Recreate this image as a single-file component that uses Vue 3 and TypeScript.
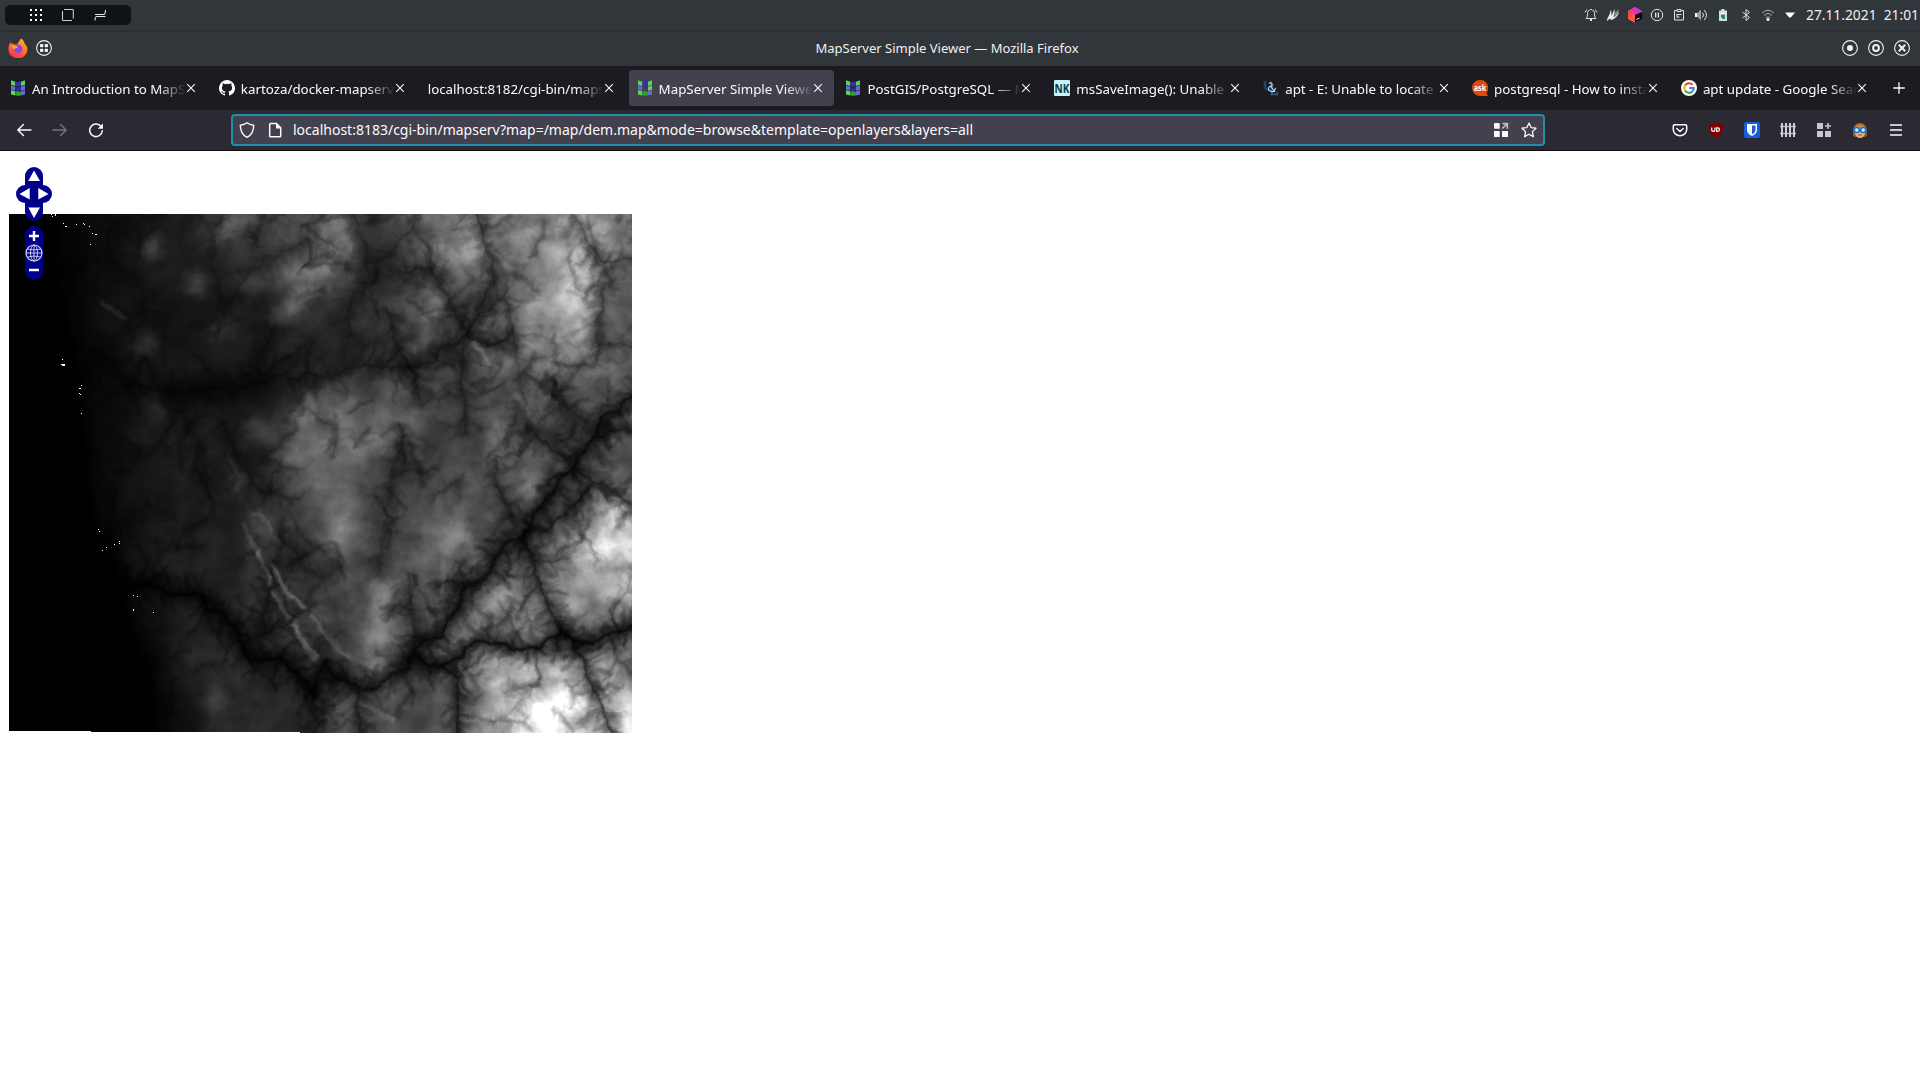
<script setup lang="ts">
interface Tab {
  title: string
  icon: string
  active?: boolean
}

const tabs: Tab[] = [
  { title: 'An Introduction to MapServer', icon: 'mapserver' },
  { title: 'kartoza/docker-mapserver', icon: 'github' },
  { title: 'localhost:8182/cgi-bin/mapserv', icon: '' },
  { title: 'MapServer Simple Viewer', icon: 'mapserver', active: true },
  { title: 'PostGIS/PostgreSQL — MapServer', icon: 'mapserver' },
  { title: 'msSaveImage(): Unable to access', icon: 'nk' },
  { title: 'apt - E: Unable to locate package', icon: 'unix' },
  { title: 'postgresql - How to install', icon: 'ask' },
  { title: 'apt update - Google Search', icon: 'google' },
]

const tray = ['bell', 'flames', 'toolbox', 'pause', 'clipboard', 'volume', 'battery', 'bluetooth', 'wifi', 'caret']
const addons = ['pocket', 'ublock', 'bitwarden', 'fence', 'extensions', 'face', 'menu']

const icons: Record<string, string> = {
  mapserver:
    '<path d="M1 .3l4.300 1.500v4.200L1 4.800zM15 .3l-4 1.500v4.200L15 4.800z" fill="#62d162"/><path d="M5.300 1.500L8 2.300l3-1v4.500L8 6.800 5.300 5.800z" fill="#3431a0"/><path d="M1 5.300l4.300 1.500v4L1 9.800zM15 5.300l-4 1.500v4L15 9.800z" fill="#6a67cf"/><path d="M5.300 6.800L8 7.500l3-1v4L8 11.500 5.300 10.500z" fill="#2d2a9c"/><path d="M1 10.300l4.300 1v4.200L1 14.500z" fill="#62d162"/><path d="M5.300 12L8 11l3 1v3.200L8 16l-2.700-.8z" fill="#2ba02b"/><path d="M15 10.300l-4 1v4.200l4-1z" fill="#6a67cf"/>',
  mapserverActive:
    '<path d="M1 .3l4.300 1.500v4.200L1 4.800zM15 .3l-4 1.500v4.200L15 4.800z" fill="#62d162"/><path d="M5.700 1L8 0l2.500 1v7L8 7.500l-2.300.5z" fill="#3431b0"/><path d="M1 5.300l4.300 1.500v4L1 9.800z" fill="#6a67cf"/><path d="M15 5.300l-4 1.500v4L15 9.800zM1 10.300l4.300 1v4.200L1 14.500z" fill="#62d162"/><path d="M5.300 12L8 11l3 1v3.200L8 16l-2.700-.8z" fill="#2ba02b"/><path d="M15 10.300l-4 1v4.200l4-1z" fill="#6a67cf"/>',
  github:
    '<path fill="#fff" d="M8 0a8 8 0 0 0-2.530 15.590c.4.070.550-.17.550-.38v-1.490c-2.230.480-2.700-.95-2.700-.95-.36-.92-.89-1.170-.89-1.170-.73-.5.060-.49.060-.49.800.060 1.230.830 1.230.830.710 1.220 1.870.870 2.330.660.070-.52.280-.87.500-1.070-1.780-.2-3.640-.89-3.640-3.950 0-.87.310-1.590.820-2.150-.08-.2-.36-1.020.08-2.120 0 0 .67-.22 2.200.820a7.600 7.600 0 0 1 4 0c1.530-1.040 2.200-.82 2.200-.82.440 1.100.160 1.920.080 2.120.510.560.820 1.270.820 2.150 0 3.070-1.870 3.750-3.650 3.950.290.250.540.730.540 1.480v2.200c0 .21.150.460.550.380A8 8 0 0 0 8 0z"/>',
  nk: '<rect width="16" height="16" rx="1" fill="#c5f3fb"/><text x="8" y="12.500" text-anchor="middle" textLength="15" lengthAdjust="spacingAndGlyphs" font-family="Noto Sans, sans-serif" font-size="12" font-weight="700" fill="#103a3e">NK</text>',
  unix: '<path d="M0 1h4v.8h-.8v5.500q.2 2 2 2t2-2V1.800H6.500V1H9v.8h-.7v6q-.5 3-3.500 3t-4-3v-6H0z" fill="#243f6b"/><path d="M7 5h4v.8h-1v8h3q1-.5 1-2h1v3.500H7v-.8h1v-8H7z" fill="#3a5a80"/><path d="M6 3.500q2.500-1.500 3 .5t-2 2.500q-3 2-.5 4t5 .5l1-3M8 6.500l4 5.500" fill="none" stroke="#b9d5ea" stroke-width="1.200"/>',
  ask: '<path d="M8 0a8 8 0 0 0 0 16h8l-1.500-3A8 8 0 0 0 8 0z" fill="#dd4b0a"/><text x="8" y="10.500" text-anchor="middle" textLength="12.500" lengthAdjust="spacingAndGlyphs" font-family="Noto Sans, sans-serif" font-size="8" font-weight="700" fill="#fff">ask</text>',
  google:
    '<circle cx="8" cy="8" r="8" fill="#fff"/><g fill="none" stroke-width="2.100"><path d="M11.600 4.700A4.700 4.700 0 0 0 4.100 5.500" stroke="#ea4335"/><path d="M4.100 5.500a4.700 4.700 0 0 0 0 5" stroke="#fbbc05"/><path d="M4.100 10.500a4.700 4.700 0 0 0 7.200 1.100" stroke="#34a853"/><path d="M11.300 11.600A4.800 4.800 0 0 0 12.700 8H8.200" stroke="#4285f4"/></g>',
  bell: '<g fill="none" stroke="#dfe1e2" stroke-width="1"><path d="M3 11.500c1.500-1.500 1.500-3 1.500-5 0-2 1-3.500 2-3 .5-1.500 2.500-1.500 3 0 1-.5 2 1 2 3 0 2 0 3.500 1.500 5z"/><path d="M2 5.500L3.800 2.500M14 5.500L12.200 2.500"/></g><path d="M7 12h2v2H7z" fill="#dfe1e2"/>',
  flames:
    '<path d="M2 14c0-4 3-5 3.500-11C7 5 6.500 7 6 8.500 8 7 8.500 5 9 2c1.500 3 .5 6-1 8 2.500-1 4-3 6-5-1 4-4 7-8 8l-1-1.500z" fill="#eceeee"/><path d="M10 6l4-4-1 4-4 5z" fill="#888d90"/>',
  toolbox:
    '<defs><linearGradient id="tbx" x1="0" y1="0" x2="1" y2="1"><stop offset="0" stop-color="#ff3a5c"/><stop offset=".5" stop-color="#ff5a3a"/><stop offset="1" stop-color="#c52dff"/></linearGradient><linearGradient id="tby" x1="0" y1="0" x2="1" y2="0"><stop offset="0" stop-color="#ff3d6e"/><stop offset="1" stop-color="#b62dff"/></linearGradient></defs><path d="M8 0l7 4v8l-7 4-7-4V4z" fill="url(#tbx)"/><path d="M8 0l7 4v4L8 8 1 4z" fill="url(#tby)"/><path d="M8 8l7-3v7l-7 4z" fill="#080808"/><path d="M9.500 12.500l3-1.500" stroke="#fff"/>',
  pause: '<circle cx="8" cy="8" r="5.700" fill="none" stroke="#dfe1e2"/><path d="M6 5.500h1.300v5H6zM8.700 5.500H10v5H8.700z" fill="#dfe1e2"/>',
  clipboard: '<path d="M6 3.500H3.500v9.500h9V3.500H10M6 2.500h4v2H6zM6 7.500h4.500M6 10h2.500M6 7v3.500" fill="none" stroke="#dfe1e2"/>',
  volume: '<path d="M2 6h2.500L8 2.500v11L4.500 10H2z" fill="#9b9fa2"/><path d="M2 6h2v4H2z" fill="#fff"/><path d="M9.500 5.500q2 2.500 0 5M11.200 3q4.500 5 0 10" fill="none" stroke="#dfe1e2"/>',
  battery: '<path d="M6.500 2h3v1.500h-3zM4 3.500h8v10.500H4z" fill="#d8dcdd"/><path d="M6 6h4v6H6z" fill="#178b6e"/><path d="M6 6h4v1.500H6zM6 10l1.500 2H6z" fill="#fff"/>',
  bluetooth: '<path d="M4.500 5l7 5.500L8 13.500V2.500l3.500 3L4.500 11" fill="none" stroke="#dfe1e2"/>',
  wifi: '<g fill="none" stroke="#a9adaf"><path d="M2 6q6-5.500 12 0M4 8.500q4-4 8 0M5.800 11q2.200-2.500 4.400 0"/></g><circle cx="8" cy="12.500" r="1.500" fill="#fff"/>',
  caret: '<path d="M3 5.500h10L8.800 10.500H7.200z" fill="#fff"/>',
  pocket: '<g fill="none" stroke="#fbfbfe" stroke-width="1.500" stroke-linecap="round" stroke-linejoin="round"><path d="M2.500 2.800h11q1.200 0 1.200 1.200v3.500a6.700 6.200 0 0 1-13.400 0V4q0-1.200 1.200-1.200z"/><path d="M4.800 6.500L8 9.500l3.200-3"/></g>',
  ublock: '<path d="M8 .3c2.500 1.700 4 1.900 7 1.900 0 7-.5 10-7 13.700C1.500 12.200 1 9.200 1 2.200c3 0 4.500-.2 7-1.900z" fill="#800000"/><path d="M3.700 5.500v2.300a1.600 1.600 0 0 0 3.200 0V5.500M8.700 5.800v3.600h1a1.800 1.800 0 0 0 0-3.600z" stroke="#fff" stroke-width="1.200" fill="none"/>',
  bitwarden: '<rect width="16" height="16" rx="2" fill="#175ddc"/><path d="M3 2h10v6c0 3-2.500 4.800-5 6-2.500-1.200-5-3-5-6z" fill="#fff"/><path d="M8 3.500h3.500V8c0 2-1.500 3.200-3.500 4.300z" fill="#175ddc"/>',
  fence: '<path d="M0 4.500h16M0 11.500h16" stroke="#b7b7bb" stroke-width="1.300"/><path d="M2 1v14M6 1v14M10 1v14M14 1v14" stroke="#cfcfd3" stroke-width="2"/>',
  extensions: '<path d="M1 1h6v6H1zM1 9h6v6H1zM9 9h6v6H9z" fill="#c8c8cc"/><path d="M12 1v6M9 4h6" stroke="#c8c8cc" stroke-width="1.600"/>',
  face: '<path d="M1.500 14C0 5 3 1 8 1s8 4 6.500 13l-2 1h-9z" fill="#a3622b"/><path d="M3 6h10v5q-1 5-5 5t-5-5z" fill="#e8b07c"/><path d="M3.500 4Q8 1 12.500 4l.5 2H3z" fill="#c98a45"/><g fill="#d9f0ff" stroke="#1a76d2" stroke-width="1.600"><circle cx="4.800" cy="8" r="2.500"/><circle cx="11.200" cy="8" r="2.500"/></g><path d="M6 13h4" stroke="#c33"/>',
  menu: '<path d="M2 3h12M2 8h12M2 13h12" stroke="#fbfbfe" stroke-width="1.400"/>',
  back: '<path d="M15 8H2M7.500 2.500L1.800 8l5.700 5.500" fill="none" stroke="#fbfbfe" stroke-width="1.400" stroke-linecap="round" stroke-linejoin="round"/>',
  forward: '<path d="M1 8h13M8.500 2.500L14.200 8l-5.700 5.500" fill="none" stroke="#75747c" stroke-width="1.400" stroke-linecap="round" stroke-linejoin="round"/>',
  reload: '<path d="M13.400 5A6.300 6.300 0 1 0 14.300 8.800" fill="none" stroke="#fbfbfe" stroke-width="1.500" stroke-linecap="round"/><path d="M15 1.500v5.300H9.700z" fill="#fbfbfe"/>',
  shield: '<path d="M8 .8c2 1.700 4.200 2.300 6.700 2.400C14.700 9 13 12.800 8 15.300 3 12.800 1.300 9 1.300 3.200 3.800 3.100 6 2.500 8 .8z" fill="none" stroke="#fbfbfe" stroke-width="1.400" stroke-linejoin="round"/>',
  page: '<path d="M3.500 1.500h6l4.200 4.200V14q0 .8-.8.8H3.500q-.8 0-.8-.8V2.300q0-.8.800-.8z" fill="none" stroke="#fbfbfe" stroke-width="1.500"/><path d="M9 1.500v5h5z" fill="#fbfbfe"/>',
  apps: '<path d="M1.500 1h4.500q.7 0 .7.700v5H1.700Q1 6.700 1 6V1.500zM1 9h5.700v6H1.500L1 14.500zM9 9h6v5.500l-.5.500H9z" fill="#fbfbfe"/><path d="M9.500 1.700h4.800v5M14.500 1.500L9.300 6.500" stroke="#c0c0c4" stroke-width="1.700" fill="none"/>',
  star: '<path d="M8 1l2.100 4.600 4.900.6-3.600 3.400.9 5L8 12.200l-4.300 2.400.9-5L1 6.200l4.900-.6z" fill="none" stroke="#fbfbfe" stroke-width="1.300" stroke-linejoin="round"/>',
  firefox:
    '<defs><linearGradient id="fx" x1=".8" y1="0" x2=".3" y2="1"><stop offset="0" stop-color="#ffb52e"/><stop offset=".45" stop-color="#ff7a28"/><stop offset="1" stop-color="#f5304f"/></linearGradient></defs><path d="M10.500.3c2 1.400 2.700 2.900 2.800 4.200 1.900 1.500 2.400 3.500 2.200 5.300A7.500 6.800 0 0 1 .4 9C.3 6.800.900 5 2 3.300l.5 1.400 1-.8.6 1.100 2.600.2C9 4 8.500 2 10.500.3z" fill="url(#fx)"/><circle cx="8" cy="8.600" r="3.500" fill="#8a45e8"/><path d="M2.800 6l4.500.6c1 .3.500 1.300-.8 1.600L4.500 9z" fill="#ffa436"/>',
  grid: '<circle cx="8" cy="8" r="7.400" fill="none" stroke="#eff0f1" stroke-width="1.100"/><g fill="#eff0f1"><rect x="4" y="4" width="3.300" height="3.300" rx=".8"/><rect x="8.700" y="4" width="3.300" height="3.300" rx=".8"/><rect x="4" y="8.700" width="3.300" height="3.300" rx=".8"/><rect x="8.700" y="8.700" width="3.300" height="3.300" rx=".8"/></g>',
  minimize: '<circle cx="8" cy="8" r="7.400" fill="none" stroke="#eff0f1" stroke-width="1.100"/><circle cx="8" cy="8" r="3" fill="#eff0f1"/>',
  maximize: '<circle cx="8" cy="8" r="7.400" fill="none" stroke="#eff0f1" stroke-width="1.100"/><circle cx="8" cy="8" r="2.900" fill="none" stroke="#eff0f1" stroke-width="2"/>',
  closeWin: '<circle cx="8" cy="8" r="7.400" fill="none" stroke="#eff0f1" stroke-width="1.100"/><path d="M4.800 4.800l6.400 6.400M11.200 4.800l-6.400 6.400" stroke="#eff0f1" stroke-width="2"/>',
  dots: '<path d="M2 2h2v2H2zM7 2h2v2H7zM12 2h2v2h-2zM2 7h2v2H2zM7 7h2v2H7zM12 7h2v2h-2zM2 12h2v2H2zM7 12h2v2H7zM12 12h2v2h-2z" fill="#fcfcfc"/>',
  square: '<path d="M4 2.500h8.500q.8 0 .8.800v8.200M12 13.500H3.300q-.8 0-.8-.8V4" fill="none" stroke="#c9cbcc" stroke-width="1.100"/>',
  swap: '<path d="M3 7.500h8.500q2 0 2-4.500M13.500 9.500H5q-2 0-2 4" fill="none" stroke="#e4e5e6" stroke-width="1.100"/>',
  x: '<path d="M4.200 4.200l7.600 7.600M11.800 4.200l-7.600 7.600" stroke="#fbfbfe" stroke-width="1.100"/>',
  plus: '<path d="M8 2.200v11.600M2.200 8h11.600" stroke="#fbfbfe" stroke-width="1.300"/>',
}

/* Coarse elevation grid: 16 × 13 gray levels across the DEM extent */
const elevation: number[][] = [
  [0, 3, 12, 20, 24, 52, 48, 62, 72, 40, 85, 105, 95, 112, 135, 95],
  [0, 2, 11, 20, 24, 26, 45, 68, 60, 34, 50, 85, 78, 98, 150, 80],
  [0, 1, 14, 16, 14, 26, 20, 36, 34, 44, 70, 45, 68, 112, 128, 72],
  [0, 0, 9, 22, 18, 24, 22, 26, 26, 36, 42, 52, 76, 98, 110, 80],
  [0, 0, 8, 13, 12, 12, 14, 34, 60, 58, 62, 52, 64, 78, 62, 70],
  [0, 0, 8, 20, 26, 24, 32, 84, 86, 80, 56, 48, 72, 60, 42, 68],
  [0, 0, 8, 18, 24, 24, 26, 84, 78, 54, 46, 60, 72, 75, 52, 70],
  [0, 0, 8, 18, 22, 24, 32, 52, 88, 54, 62, 74, 58, 45, 75, 130],
  [0, 0, 2, 20, 26, 26, 42, 36, 70, 48, 80, 82, 50, 62, 130, 165],
  [0, 0, 0, 14, 22, 24, 42, 46, 48, 80, 72, 60, 98, 92, 112, 125],
  [0, 0, 0, 5, 26, 26, 32, 44, 48, 86, 46, 80, 85, 85, 75, 80],
  [0, 0, 0, 1, 22, 40, 26, 34, 40, 66, 48, 88, 118, 150, 110, 115],
  [0, 0, 0, 0, 12, 32, 34, 32, 64, 66, 60, 72, 130, 205, 180, 160],
]
const cellW = 623 / 16
const cellH = 519 / 13
const cells = elevation.flatMap((row, r) =>
  row.map((v, c) => {
    const x0 = c === 0 ? -40 : 9 + c * cellW
    const x1 = c === 15 ? 690 : 9 + (c + 1) * cellW + 0.5
    const y0 = r === 0 ? 160 : 214 + r * cellH
    const y1 = r === 12 ? 790 : 214 + (r + 1) * cellH + 0.5
    return { x: x0, y: y0, w: x1 - x0, h: y1 - y0, fill: `rgb(${v},${v},${v})` }
  }),
)

/* Highlands: cx, cy, rx, ry, rotation, opacity */
const highlands: number[][] = [
  [234, 225, 20, 7, -25, 0.2], [153, 246, 6, 13, 0, 0.2], [197, 284, 12, 10, 30, 0.15],
  [293, 272, 18, 6, -28, 0.22], [293, 305, 24, 7, -38, 0.24], [250, 283, 14, 5, -15, 0.14],
  [320, 275, 14, 18, 40, 0.16], [342, 248, 13, 11, 0, 0.22], [333, 225, 12, 8, 0, 0.2],
  [465, 248, 14, 22, 10, 0.16], [434, 308, 9, 18, 10, 0.2], [417, 345, 12, 6, -40, 0.18],
  [611, 250, 6, 8, 0, 0.34], [578, 285, 16, 38, 18, 0.16], [584, 320, 12, 22, 10, 0.16],
  [540, 310, 22, 12, -20, 0.1], [600, 228, 10, 12, 0, 0.14], [145, 342, 8, 14, 10, 0.07],
  [220, 330, 16, 10, -30, 0.08], [155, 405, 8, 22, -12, 0.06], [260, 430, 18, 12, 0, 0.06],
  [310, 405, 10, 18, 0, 0.16], [345, 408, 26, 10, -10, 0.1], [372, 440, 30, 10, -45, 0.1],
  [340, 530, 16, 16, 0, 0.12], [410, 420, 10, 10, 0, 0.16], [497, 440, 10, 16, -30, 0.12],
  [453, 535, 14, 20, 30, 0.16], [530, 487, 10, 14, 0, 0.18], [611, 528, 13, 36, 28, 0.3],
  [592, 556, 14, 24, 50, 0.14], [508, 600, 22, 16, 0, 0.14], [530, 620, 14, 10, 0, 0.12],
  [575, 605, 14, 10, -40, 0.12], [628, 590, 10, 26, 30, 0.16], [381, 620, 12, 30, 4, 0.14],
  [463, 635, 12, 9, -30, 0.22], [375, 664, 14, 10, 0, 0.2], [495, 675, 12, 22, 10, 0.14],
  [558, 708, 24, 16, -30, 0.38], [556, 722, 12, 10, 0, 0.7], [525, 702, 24, 9, -35, 0.26],
  [560, 668, 14, 14, 20, 0.14], [607, 672, 10, 24, -20, 0.2], [626, 716, 10, 24, 0, 0.2],
  [193, 655, 6, 14, -20, 0.06], [215, 705, 10, 16, 0, 0.07], [318, 618, 6, 14, -30, 0.14],
  [238, 480, 5, 18, -12, 0.12], [265, 524, 10, 18, -35, 0.12],
]

/* Sharp ridge crests */
const ridges: [string, number][] = [
  ['M100 300L113 310L127 321', 0.1], ['M243 522L255 548L258 556', 0.12],
  ['M257 550L267 573L271 586', 0.18], ['M273 563L280 582L290 597L307 607', 0.26],
  ['M274 590L281 606L288 617', 0.22], ['M292 621L302 640L316 659', 0.24],
  ['M310 613L328 638L353 660', 0.16], ['M256 512L270 528L280 546', 0.12],
  ['M472 342L482 352L489 364', 0.22], ['M441 560L444 580L440 600', 0.1],
  ['M360 703L375 710L395 722', 0.16], ['M514 392L525 408L534 424', 0.1],
  ['M228 452L236 474L239 490', 0.05],
]

/* Valley lines as point lists, with width and darkness */
interface Valley { p: number[][]; w: number; o: number }
const v = (s: string, w: number, o: number): Valley => ({
  p: s.split(' ').map((t) => t.split(',').map(Number)),
  w,
  o,
})
const valleys: Valley[] = [
  v('97,350 113,363 127,385 147,388 170,393 207,390 247,387 277,377 290,380 310,374 327,380 347,368 377,366 410,368 433,360 443,347 460,342 467,332', 1.4, 0.6),
  v('467,332 450,305 440,285 430,268 400,272', 2, 0.5),
  v('467,332 480,315 500,300 508,290', 1.5, 0.55),
  v('467,332 480,342 490,345 505,340 515,330', 2, 0.6),
  v('475,205 483,240 492,265 493,285 475,312', 2, 0.5),
  v('567,205 587,240 600,260 620,262 640,254', 1.6, 0.5),
  v('605,283 600,317 597,347 597,363', 1.8, 0.5),
  v('597,346 612,344 640,348', 1.5, 0.45),
  v('640,385 630,396 617,410 600,420 595,437 580,457 573,467 557,485 540,507 527,532 510,540 497,557 483,580 463,588 460,603 445,627 440,637 423,640 413,650 407,667 383,680 373,690 360,687 347,682 332,677 327,660 320,673 313,697', 2.6, 0.85),
  v('640,429 610,430 597,437', 2, 0.7),
  v('540,383 557,383 563,407 587,423', 1.5, 0.6),
  v('527,427 550,447 570,463', 1.8, 0.6),
  v('523,533 533,567 547,603 560,630 573,640 587,673 603,707 614,740', 2, 0.75),
  v('640,627 620,630 593,643 573,640 560,633 540,647 523,650 497,643 477,640 460,657 443,665 427,668 415,653', 3, 0.9),
  v('443,665 457,680 458,707 457,740', 2, 0.8),
  v('593,483 570,510 543,530 523,533', 2, 0.7),
  v('573,467 600,483 640,510', 2, 0.7),
  v('100,586 127,586 153,585 173,595 200,592 208,610 223,613 237,633 247,657 263,662 282,658 297,673 315,697', 3, 0.95),
  v('245,645 263,633 263,613 272,587 273,563', 1.5, 0.7),
  v('263,633 283,627 293,617 313,603', 1.2, 0.6),
  v('358,690 357,707 362,740', 1.6, 0.7),
  v('313,697 312,712 318,722 314,740', 1.4, 0.7),
  v('497,455 497,487 517,527', 1.6, 0.55),
  v('400,440 392,480 385,527 377,577', 2, 0.3),
  v('407,573 413,620 417,645', 1.6, 0.45),
  v('463,350 462,390 467,433', 1.8, 0.5),
  v('387,307 397,343 410,367 423,400', 1.8, 0.5),
  v('400,423 403,445 405,467', 2, 0.5),
  v('507,300 516,350 523,400 527,420', 1.4, 0.4),
  v('400,233 450,230 510,226 565,226', 1, 0.2),
  v('610,640 617,660 640,682', 1.3, 0.5),
  v('620,630 612,618 607,612', 1.6, 0.6),
  v('107,232 107,257 125,270 140,280 145,310 135,330', 1.5, 0.3),
  v('110,230 130,215 150,218 165,212', 1.2, 0.4),
  v('170,393 185,420 192,440', 2, 0.4),
  v('220,420 245,470 258,490 300,500', 2, 0.4),
  v('200,440 206,470 210,500', 2, 0.3),
  v('133,540 128,525 134,515 150,500', 1.2, 0.4),
  v('258,375 262,350 275,330', 1.5, 0.4),
  v('352,214 365,245 368,275 350,300 348,340', 2, 0.35),
  v('423,214 400,240 378,265 372,285', 2, 0.35),
  v('200,214 215,240 212,270 225,300 205,330', 2, 0.3),
  v('310,240 290,250 262,262 235,290', 2, 0.3),
  v('345,560 320,580 300,560 283,540', 2, 0.35),
  v('455,560 462,575 463,588', 2, 0.4),
  v('535,560 550,562 570,560', 1.4, 0.45),
  v('533,680 520,700 505,718', 1.4, 0.3),
]

/* Seeded generator so the drainage pattern is stable between renders */
let seed = 20211
const rand = (): number => {
  seed = (seed * 16807) % 2147483647
  return seed / 2147483647
}

/* Points of a wandering line from a start and heading */
function wander(x: number, y: number, a: number, steps: number, step: number): number[][] {
  const pts = [[x, y]]
  for (let s = 0; s < steps; s++) {
    a += (rand() - 0.5) * 0.7
    x += Math.cos(a) * step
    y += Math.sin(a) * step
    pts.push([x, y])
  }
  return pts
}
const toPath = (pts: number[][]): string => 'M' + pts.map((q) => q[0].toFixed(1) + ' ' + q[1].toFixed(1)).join('L')

/* Tributaries fanning out from both sides of a valley */
function tributaries(line: number[][], gap: number, reach: number): string {
  let d = ''
  for (let i = 0; i < line.length - 1; i++) {
    const [ax, ay] = line[i]
    const [bx, by] = line[i + 1]
    const len = Math.hypot(bx - ax, by - ay)
    const dir = Math.atan2(by - ay, bx - ax)
    for (let t = 0; t < len; t += gap) {
      const side = rand() > 0.5 ? 1 : -1
      const a = dir + side * (0.7 + rand() * 0.8)
      d += toPath(wander(ax + ((bx - ax) * t) / len, ay + ((by - ay) * t) / len, a, 2 + Math.floor(rand() * reach), 4))
    }
  }
  return d
}
const rivers = valleys.map((r) => ({
  d: toPath(r.p),
  side: tributaries(r.p, 2.2, 5),
  halo: tributaries(r.p, 6, 8),
  w: r.w,
  o: r.o,
}))

/* Minor creeks with their own side gullies, giving slopes a feathered grain */
const creeks = Array.from({ length: 150 }, () => {
  const a = (rand() < 0.6 ? -0.9 : 1.1) + (rand() - 0.5) * 1.2
  const line = wander(80 + rand() * 560, 205 + rand() * 535, a, 5 + Math.floor(rand() * 6), 5)
  return { d: toPath(line), side: tributaries(line, 3, 3) }
})

/* Isolated no-data pixels: x, y, width, height */
const specks: number[][] = [
  [51, 214, 1, 1], [52, 216, 1, 1], [55, 214, 1, 2], [63, 223, 1, 1], [65, 226, 2, 1], [76, 224, 1, 1],
  [83, 223, 1, 1], [84, 224, 1, 1], [89, 226, 1, 1], [92, 233, 1, 1], [95, 234, 2, 1], [90, 244, 1, 1],
  [62, 359, 1, 1], [61, 364, 2, 1], [62, 364, 3, 2], [81, 385, 1, 1], [79, 388, 2, 1], [79, 393, 1, 1],
  [80, 394, 1, 1], [81, 413, 1, 1], [98, 529, 1, 1], [99, 531, 1, 1], [119, 541, 1, 1], [119, 543, 1, 1],
  [114, 544, 1, 1], [106, 547, 1, 1], [102, 550, 1, 1], [133, 595, 1, 1], [137, 596, 1, 1], [133, 609, 1, 2],
  [153, 612, 1, 1],
]
</script>

<template>
  <div class="screen">
    <header class="panel">
      <div class="launcher">
        <svg v-for="n in ['dots', 'square', 'swap']" :key="n" class="ico" viewBox="0 0 16 16" v-html="icons[n]" />
      </div>
      <div class="tray">
        <svg v-for="n in tray" :key="n" class="ico" viewBox="0 0 16 16" v-html="icons[n]" />
        <span class="clock">27.11.2021&nbsp; 21:01</span>
      </div>
    </header>

    <div class="titlebar">
      <div class="side">
        <svg class="fx" viewBox="0 0 16 16" v-html="icons.firefox" />
        <svg class="ico" viewBox="0 0 16 16" v-html="icons.grid" />
      </div>
      <span class="wintitle">MapServer Simple Viewer — Mozilla Firefox</span>
      <div class="side end">
        <svg v-for="n in ['minimize', 'maximize', 'closeWin']" :key="n" class="ico" viewBox="0 0 16 16" v-html="icons[n]" />
      </div>
    </div>

    <nav class="tabs">
      <div v-for="tab in tabs" :key="tab.title" class="tab" :class="{ active: tab.active }">
        <svg v-if="tab.icon" class="ico fav" viewBox="0 0 16 16" v-html="tab.active ? icons.mapserverActive : icons[tab.icon]" />
        <span class="label">{{ tab.title }}</span>
        <svg class="ico cross" viewBox="0 0 16 16" v-html="icons.x" />
      </div>
      <svg class="ico newtab" viewBox="0 0 16 16" v-html="icons.plus" />
    </nav>

    <div class="toolbar">
      <div class="navbtns">
        <svg v-for="n in ['back', 'forward', 'reload']" :key="n" class="ico" viewBox="0 0 16 16" v-html="icons[n]" />
      </div>
      <div class="urlbar">
        <svg class="ico" viewBox="0 0 16 16" v-html="icons.shield" />
        <svg class="ico" viewBox="0 0 16 16" v-html="icons.page" />
        <span class="url">localhost:8183/cgi-bin/mapserv?map=/map/dem.map&amp;mode=browse&amp;template=openlayers&amp;layers=all</span>
        <svg class="ico" viewBox="0 0 16 16" v-html="icons.apps" />
        <svg class="ico" viewBox="0 0 16 16" v-html="icons.star" />
      </div>
      <div class="addons">
        <svg v-for="n in addons" :key="n" class="ico" viewBox="0 0 16 16" v-html="icons[n]" />
      </div>
    </div>

    <main class="page">
      <svg class="dem" width="623" height="519" viewBox="9 214 623 519" color-interpolation-filters="sRGB">
        <defs>
          <filter id="soft" filterUnits="userSpaceOnUse" x="-60" y="140" width="770" height="670"><feGaussianBlur stdDeviation="12" /></filter>
          <filter id="blob" filterUnits="userSpaceOnUse" x="-60" y="140" width="770" height="670"><feGaussianBlur stdDeviation="6" /></filter>
          <filter id="wide" filterUnits="userSpaceOnUse" x="-60" y="140" width="770" height="670"><feGaussianBlur stdDeviation="5" /></filter>
          <filter id="fine" filterUnits="userSpaceOnUse" x="-60" y="140" width="770" height="670"><feGaussianBlur stdDeviation="0.8" /></filter>
          <filter id="haze" filterUnits="userSpaceOnUse" x="-60" y="140" width="770" height="670"><feGaussianBlur stdDeviation="1.8" /></filter>
          <filter id="terrain" filterUnits="userSpaceOnUse" x="-20" y="180" width="680" height="590">
            <feTurbulence type="fractalNoise" baseFrequency="0.07" numOctaves="3" seed="7" result="warp" />
            <feDisplacementMap in="SourceGraphic" in2="warp" scale="9" xChannelSelector="R" yChannelSelector="G" result="moved" />
            <feTurbulence type="fractalNoise" baseFrequency="0.045" numOctaves="4" seed="12" />
            <feColorMatrix values="1.1 1.1 0 0 -0.6  1.1 1.1 0 0 -0.6  1.1 1.1 0 0 -0.6  0 0 0 0 1" result="relief" />
            <feComposite in="moved" in2="relief" operator="arithmetic" k1="0.5" k2="0.98" k3="0" k4="0" />
          </filter>
        </defs>
        <g filter="url(#terrain)">
          <rect x="-60" y="140" width="770" height="670" fill="#000" />
          <g filter="url(#soft)">
            <rect v-for="(c, i) in cells" :key="i" :x="c.x" :y="c.y" :width="c.w" :height="c.h" :fill="c.fill" />
          </g>
          <g filter="url(#blob)" fill="#fff">
            <ellipse v-for="(h, i) in highlands" :key="i" :cx="h[0]" :cy="h[1]" :rx="h[2]" :ry="h[3]" :opacity="h[5]" :transform="`rotate(${h[4]} ${h[0]} ${h[1]})`" />
          </g>
          <g filter="url(#wide)" fill="none" stroke="#000" stroke-linejoin="round">
            <path v-for="(r, i) in rivers" :key="i" :d="r.d" :stroke-width="r.w * 5" :opacity="r.o * 0.6" />
          </g>
          <g filter="url(#haze)" fill="none" stroke="#000" stroke-linejoin="round" stroke-linecap="round">
            <path v-for="(c, i) in creeks" :key="'k' + i" :d="c.d" stroke-width="4" opacity="0.28" />
            <path v-for="(r, i) in rivers" :key="'h' + i" :d="r.halo" stroke-width="3" :opacity="r.o * 0.42" />
          </g>
          <g filter="url(#fine)" fill="none" stroke="#000" stroke-linejoin="round">
            <path v-for="(c, i) in creeks" :key="'j' + i" :d="c.side" stroke-width="1.3" opacity="0.16" />
            <path v-for="(r, i) in rivers" :key="'t' + i" :d="r.side" stroke-width="1.3" :opacity="r.o * 0.36" />
            <path v-for="(r, i) in rivers" :key="'r' + i" :d="r.d" :stroke-width="r.w" :opacity="r.o * 0.8" />
          </g>
          <g filter="url(#haze)" fill="none" stroke-linejoin="round">
            <path v-for="(r, i) in ridges" :key="'c' + i" :d="r[0]" stroke="#ccc" stroke-width="4" :opacity="r[1]" />
          </g>
          <path filter="url(#wide)" d="M-20 180H48L48 260L50 320L60 345L70 375L80 420L86 440L90 490L98 530L110 555L121 585L131 610L137 660L144 700L149 780H-20z" />
        </g>
        <g fill="#fff" shape-rendering="crispEdges">
          <rect v-for="(s, i) in specks" :key="i" :x="s[0]" :y="s[1]" :width="s[2]" :height="s[3]" />
        </g>
      </svg>

      <svg class="panzoom" width="36" height="114" viewBox="16 167 36 114">
        <g fill="#00008b">
          <rect x="25" y="167" width="18" height="54" rx="9" />
          <rect x="16" y="185" width="36" height="18" rx="9" />
          <rect x="25" y="226" width="18" height="54" rx="9" />
        </g>
        <path d="M34 170.500L40 181H28.300zM34 218L40 207.500H28.300zM19.500 194L29.700 188V199.500zM48.500 194L38.300 188V199.500z" fill="#fff" />
        <path d="M29 236h10M34 231v10M29 270h10" stroke="#fff" stroke-width="2.400" />
        <g fill="none" stroke="#d8d8f2" stroke-width="0.900">
          <circle cx="34" cy="253" r="8" stroke-width="1.200" />
          <ellipse cx="34" cy="253" rx="3.500" ry="8" />
          <path d="M26 253h16M27.500 249q6.500 2 13 0M27.500 257q6.500-2 13 0M34 245v16" />
        </g>
      </svg>
    </main>
  </div>
</template>

<style>
body {
  background: #fff;
  overflow: hidden;
}
</style>

<style scoped>
.screen {
  width: 1920px;
  height: 1080px;
  display: flex;
  flex-direction: column;
  background: #fff;
  font-family: 'Noto Sans', sans-serif;
  color: #fbfbfe;
  overflow: hidden;
}
.ico {
  width: 16px;
  height: 16px;
  flex: none;
  display: block;
}
.panel {
  height: 32px;
  flex: none;
  box-sizing: border-box;
  padding: 0 0 2px 5px;
  display: flex;
  align-items: center;
  justify-content: space-between;
  background: linear-gradient(#31363a 30px, #292d31 31px, #2d3236 32px);
}
.launcher {
  width: 126px;
  height: 20px;
  box-sizing: border-box;
  padding: 0 23px;
  display: flex;
  align-items: center;
  justify-content: space-between;
  border-radius: 5px;
  background: #101213;
}
.tray {
  display: flex;
  align-items: center;
  gap: 6.150px;
}
.clock {
  width: 114px;
  margin: -2px 0 0 2px;
  font-size: 13.800px;
  white-space: nowrap;
  color: #eff0f1;
}
.titlebar {
  height: 34px;
  flex: none;
  display: flex;
  align-items: center;
  background: #31363a;
  color: #eff0f1;
  font-size: 13px;
}
.side {
  width: 800px;
  box-sizing: border-box;
  padding: 0 0 2px 8px;
  display: flex;
  align-items: center;
  gap: 8px;
}
.side.end {
  padding: 0 10px 2px 0;
  justify-content: flex-end;
  gap: 10px;
}
.fx {
  width: 20px;
  height: 20px;
}
.wintitle {
  flex: 1;
  text-align: center;
  white-space: nowrap;
  margin: -2px 13px 0 -13px;
}
.tabs {
  height: 44px;
  flex: none;
  display: flex;
  align-items: center;
  gap: 3.860px;
  padding-left: 2px;
  background: #1c1b22;
}
.tab {
  width: 205px;
  height: 36px;
  flex: none;
  box-sizing: border-box;
  padding: 0 8px 0 8px;
  display: flex;
  align-items: center;
  border-radius: 4px;
  font-size: 13.330px;
}
.tab.active {
  background: #42414d;
}
.fav {
  margin-right: 6px;
}
.label {
  flex: 1;
  min-width: 0;
  overflow: hidden;
  white-space: nowrap;
  margin-right: -3px;
  padding-top: 2px;
  -webkit-mask-image: linear-gradient(to left, transparent, #000 28px);
  mask-image: linear-gradient(to left, transparent, #000 28px);
}
.newtab {
  margin-left: 9px;
}
.toolbar {
  height: 41px;
  flex: none;
  box-sizing: border-box;
  display: flex;
  align-items: center;
  background: #2b2a33;
  border-bottom: 1px solid #0c0c0d;
}
.navbtns {
  width: 231px;
  box-sizing: border-box;
  padding-left: 16px;
  display: flex;
  gap: 20px;
}
.urlbar {
  width: 1314px;
  height: 32px;
  box-sizing: border-box;
  padding: 0 6px;
  display: flex;
  align-items: center;
  gap: 12px;
  border: 2px solid #1f90a9;
  border-radius: 4px;
  background: #42414d;
}
.url {
  flex: 1;
  margin: -2px 0 0 -2px;
  font-size: 14px;
  white-space: nowrap;
}
.addons {
  flex: 1;
  display: flex;
  justify-content: flex-end;
  gap: 20px;
  padding-right: 16px;
}
.page {
  position: relative;
  flex: 1;
  padding: 63px 0 0 9px;
  background: #fff;
}
.dem {
  display: block;
  background: #000;
  clip-path: polygon(0 0, 623px 0, 623px 519px, 291px 519px, 291px 518px, 82px 518px, 82px 517px, 0 517px);
}
.panzoom {
  position: absolute;
  left: 16px;
  top: 16px;
}
</style>
